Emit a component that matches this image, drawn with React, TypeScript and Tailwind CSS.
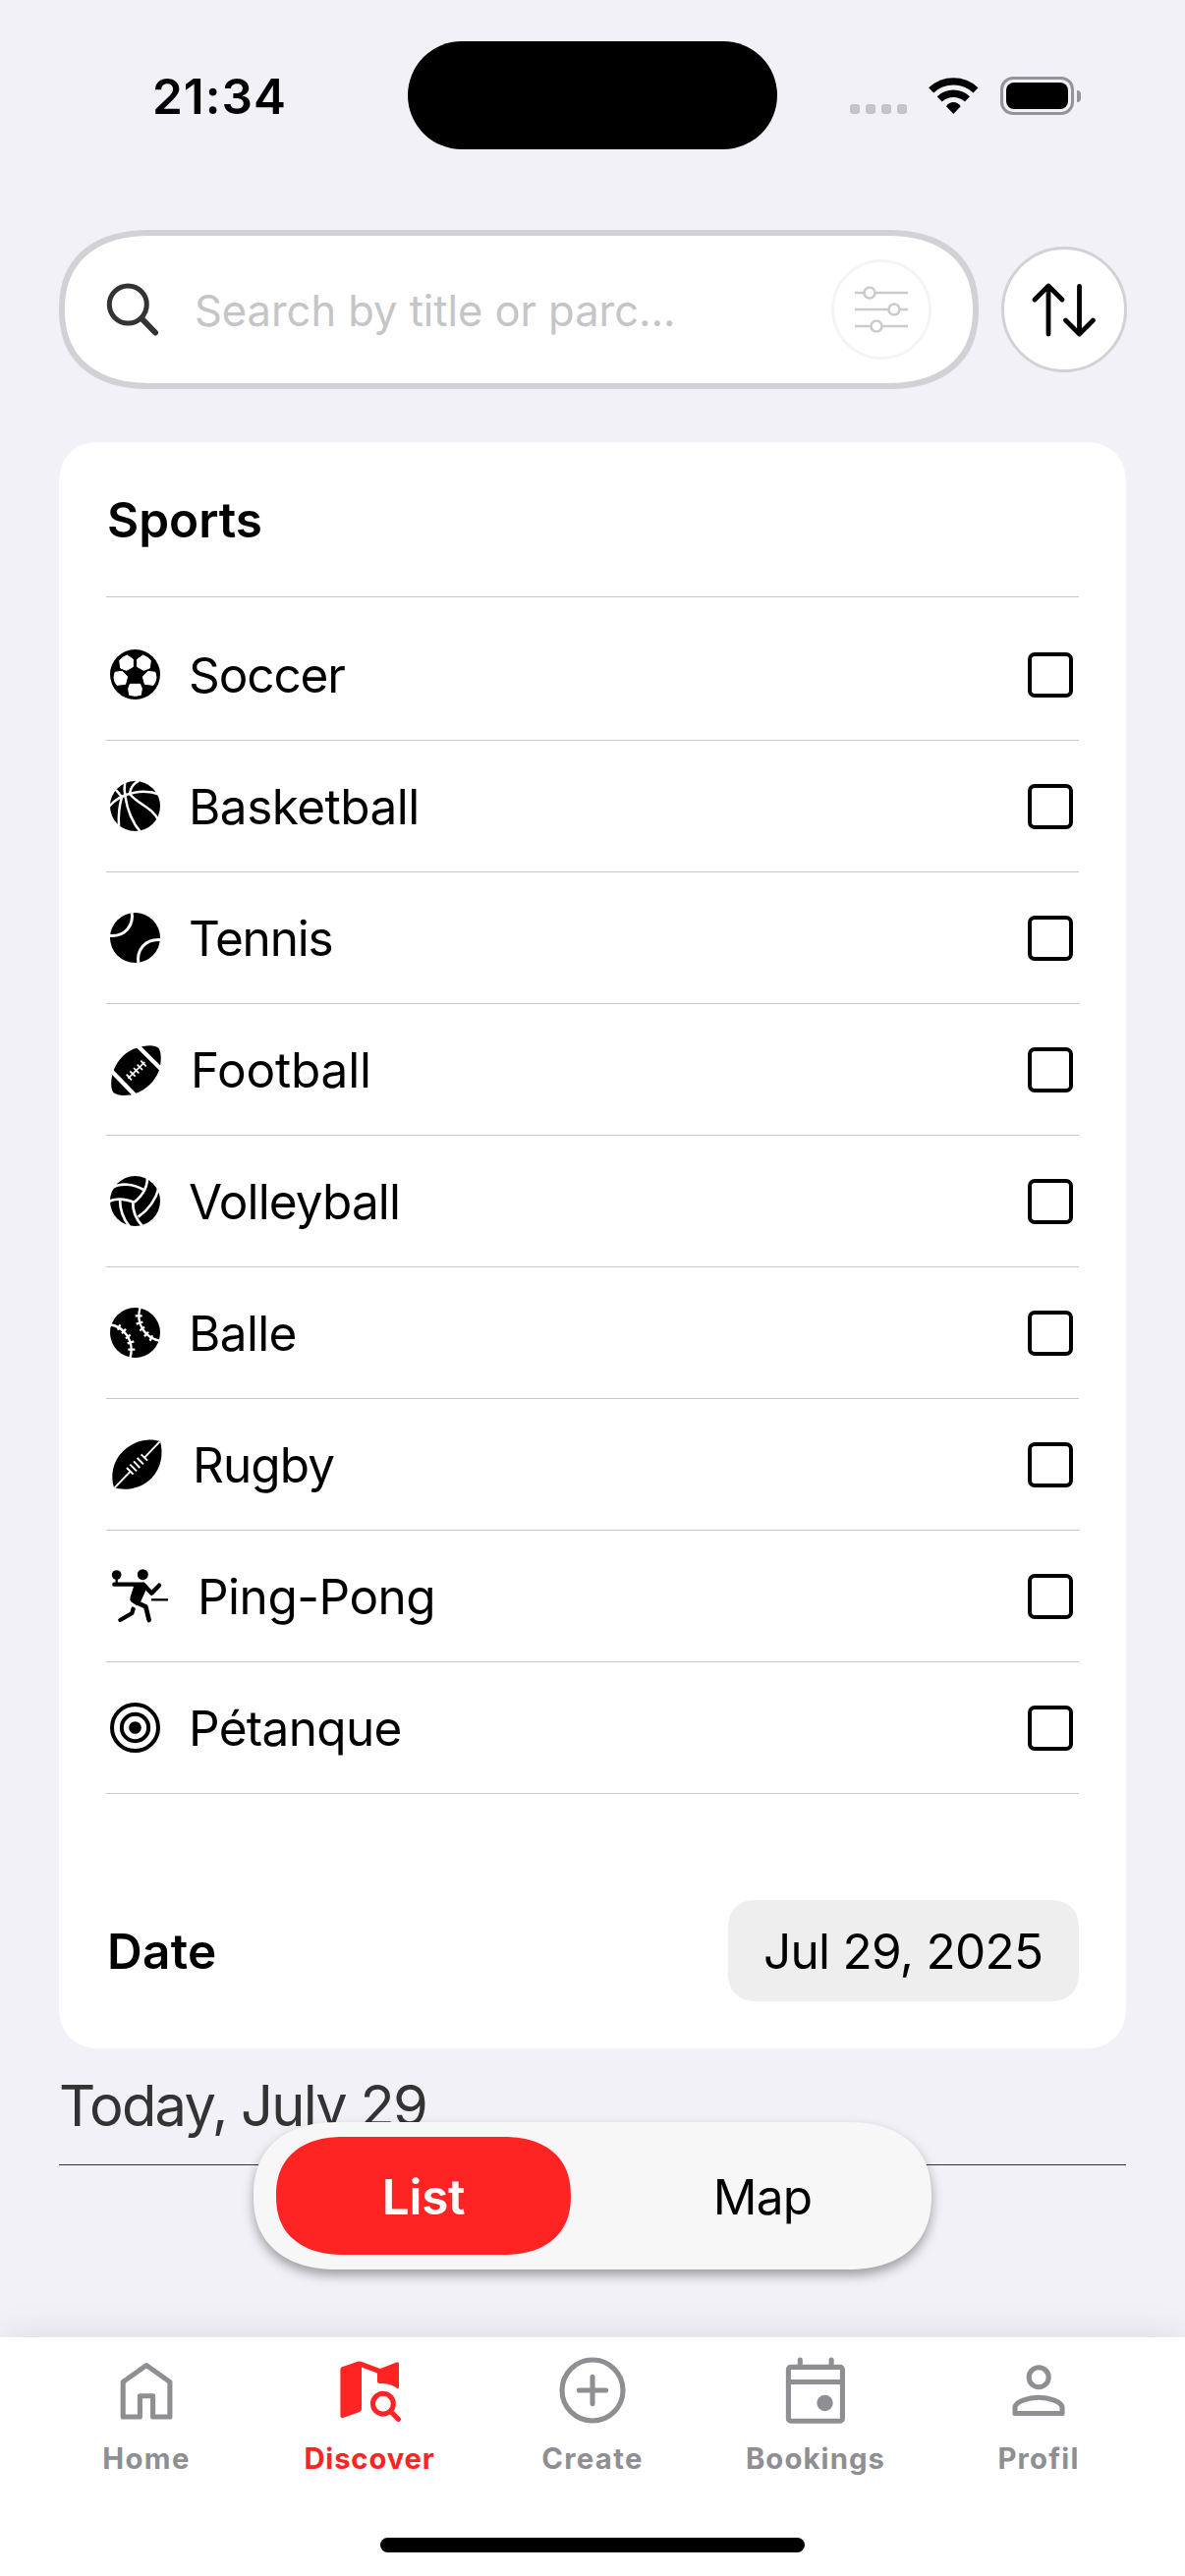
import type { ReactNode } from 'react';

/* ---------- Sport glyphs ---------- */

function Glyph({ top, size = 'w-[55px]', width = 165, children }: { top: number; size?: string; width?: number; children: ReactNode }) {
  return (
    <svg viewBox={`54 ${top} ${width} 171`} className={`h-[57px] shrink-0 overflow-visible ${size}`} fill="black" strokeLinecap="butt">
      {children}
    </svg>
  );
}

function Soccer() {
  return (
    <Glyph top={684}>
      <circle cx="142.5" cy="769.5" r="76.5" />
      <g fill="white" stroke="white" strokeWidth="3" strokeLinejoin="round">
        <path d="M95 727 Q104 716 118 711 L136 723 V746 L116 757 L98 750Z" />
        <path d="M190 727 Q181 716 167 711 L149 723 V746 L169 757 L187 750Z" />
        <path d="M81 763 L103 760 L119 776 L113 799 L87 802 Q79 792 78 779Z" />
        <path d="M204 763 L182 760 L166 776 L172 799 L198 802 Q206 792 207 779Z" />
        <path d="M127 799 H158 L163 813 L160 832 Q142 838 125 832 L122 813Z" />
      </g>
    </Glyph>
  );
}

function Basketball() {
  return (
    <Glyph top={1086}>
      <circle cx="142.5" cy="1171.5" r="76.5" />
      <g fill="none" stroke="white" strokeWidth="7.5">
        <path d="M62 1174 C82 1148 108 1136 140 1130 C168 1124 195 1127 220 1137" />
        <path d="M112 1096 C108 1118 110 1130 112 1140 C118 1180 132 1220 160 1252" />
        <path d="M84 1122 L102 1144 C94 1170 91 1200 93 1232" />
        <path d="M154 1094 C138 1102 128 1116 126 1134 C150 1166 196 1174 214 1216" />
      </g>
    </Glyph>
  );
}

function Tennis() {
  return (
    <Glyph top={228}>
      <circle cx="142.5" cy="313.5" r="76.5" />
      <g fill="none" stroke="white" strokeWidth="9">
        <path d="M132 232 C140 276 112 312 62 307" />
        <path d="M153 395 C145 351 173 315 223 320" />
      </g>
    </Glyph>
  );
}

function Football() {
  return (
    <Glyph top={630} size="w-[57px]" width={171}>
      <path d="M214 650 C222 660 225 690 215 720 C203 752 176 778 145 788 C120 797 90 797 77 787 C67 776 67 746 77 718 C89 686 116 658 147 650 C175 640 204 640 214 650Z" />
      <path d="M151 644 L222 715 M70 720 L142 794" stroke="white" strokeWidth="13" />
      <path
        d="M121 743 L172 693 M116 731 L132 748 M127 721 L143 737 M138 711 L154 727 M149 701 L165 717 M160 689 L176 706"
        stroke="white"
        strokeWidth="5"
      />
    </Glyph>
  );
}

function Volleyball() {
  return (
    <Glyph top={1032}>
      <circle cx="142.5" cy="1117.5" r="76.5" />
      <g fill="none" stroke="white" strokeWidth="8">
        <path d="M70 1078 C100 1060 138 1066 168 1083" />
        <path d="M180 1040 C182 1076 164 1102 140 1121" />
        <path d="M62 1119 C86 1106 114 1112 140 1121" />
        <path d="M136 1119 C134 1146 146 1174 166 1196" />
        <path d="M96 1112 C96 1146 106 1172 126 1196" />
        <path d="M216 1074 C206 1112 184 1144 152 1166" />
      </g>
    </Glyph>
  );
}

function Baseball() {
  const seam = 'M64 234 C112 242 142 286 127 338 M97 235 L90 251 M114 248 L102 262 M128 266 L114 277 M139 286 L119 292 M142 311 L121 311';
  return (
    <Glyph top={174}>
      <circle cx="142.5" cy="259.5" r="76.5" />
      <g fill="none" stroke="white" strokeWidth="7">
        <path d={seam} />
        <path d={seam} transform="rotate(180 142.5 259.5)" />
      </g>
    </Glyph>
  );
}

function Rugby() {
  return (
    <Glyph top={576} size="w-[59px]" width={177}>
      <path d="M219 591 C229 626 224 672 192 704 C160 736 114 743 78 733 C68 700 71 654 106 621 C140 588 184 580 219 591Z" />
      <path
        d="M79 734 L126 685 M172 640 L218 592 M117 672 L137 692 M127 662 L147 682 M138 652 L157 672 M149 642 L168 661 M161 631 L180 650"
        stroke="white"
        strokeWidth="6"
      />
    </Glyph>
  );
}

function PingPong() {
  return (
    <Glyph top={108} size="w-[64px]" width={192}>
      <circle cx="86" cy="129" r="14.5" />
      <circle cx="166" cy="128" r="16.5" />
      <path d="M132 160 L170 152 L179 168 L160 210 L148 222 L134 214 Q124 208 128 196 L138 165Z" />
      <g fill="none" stroke="black" strokeLinecap="round" strokeLinejoin="round">
        <path d="M79 158 H168 L193 185 L216 161" strokeWidth="13" />
        <path d="M86 140 V154" strokeWidth="7" strokeLinecap="butt" />
        <path d="M144 212 L175 226 L185 267" strokeWidth="14" />
        <path d="M137 232 L133 246 L97 267" strokeWidth="13" />
      </g>
      <path d="M128 220 L152 232" stroke="white" strokeWidth="4" />
      <path d="M192 205 H243" stroke="black" strokeWidth="7" />
    </Glyph>
  );
}

function Petanque() {
  return (
    <Glyph top={510}>
      <g fill="none" stroke="black" strokeWidth="12">
        <circle cx="142.5" cy="595.5" r="70.5" />
        <circle cx="142.5" cy="595.5" r="41" />
      </g>
      <circle cx="142.5" cy="595.5" r="19" />
    </Glyph>
  );
}

const sports: { name: string; icon: ReactNode; tracking: string }[] = [
  { name: 'Soccer', icon: <Soccer />, tracking: 'tracking-[-1.11px]' },
  { name: 'Basketball', icon: <Basketball />, tracking: 'tracking-[-0.52px]' },
  { name: 'Tennis', icon: <Tennis />, tracking: 'tracking-[-1.18px]' },
  { name: 'Football', icon: <Football />, tracking: 'tracking-[-0.2px]' },
  { name: 'Volleyball', icon: <Volleyball />, tracking: 'tracking-[-0.88px]' },
  { name: 'Balle', icon: <Baseball />, tracking: 'tracking-[-0.64px]' },
  { name: 'Rugby', icon: <Rugby />, tracking: 'tracking-[-0.9px]' },
  { name: 'Ping-Pong', icon: <PingPong />, tracking: 'tracking-[-0.49px]' },
  { name: 'Pétanque', icon: <Petanque />, tracking: 'tracking-[-0.68px]' },
];

/* ---------- Sections ---------- */

function StatusBar() {
  return (
    <header className="flex h-[234px] items-start pt-[42px]">
      <div className="flex h-[111px] w-[415px] items-center pl-[155px] pt-[2px] text-[49.5px] font-semibold tracking-[0.99px]">21:34</div>
      <div className="h-[110px] w-[376px] rounded-full bg-black" />
      <div className="ml-[74px] mt-[36px] flex h-[39px] items-start">
        <div className="mt-[28px] flex gap-[6px]">
          <span className="size-[10px] rounded-[3px] bg-[#c3c3c8]" />
          <span className="size-[10px] rounded-[3px] bg-[#c3c3c8]" />
          <span className="size-[10px] rounded-[3px] bg-[#c3c3c8]" />
          <span className="size-[10px] rounded-[3px] bg-[#c3c3c8]" />
        </div>
        <svg viewBox="375 84 153 117" className="ml-[22px] h-[39px] w-[51px]" fill="none" stroke="black" strokeWidth="22">
          <path d="M383 125.5 A99.5 99.5 0 0 1 519 125.5" />
          <path d="M408.7 152.5 A62 62 0 0 1 493.3 152.5" />
          <path d="M451 198 L429 174.5 Q438 162 451 162 Q464 162 473 174.5Z" fill="black" stroke="none" />
        </svg>
        <div className="ml-[22px] flex items-center">
          <div className="h-[39px] w-[75px] rounded-[13px] border-3 border-[#959598] p-[3px]">
            <div className="h-full w-full rounded-[8px] bg-black" />
          </div>
          <div className="ml-[3px] h-[12px] w-[4px] rounded-r-full bg-[#959598]" />
        </div>
      </div>
    </header>
  );
}

function SearchRow() {
  return (
    <div className="flex items-center justify-between pl-[60px] pr-[59px]">
      <div className="flex h-[162px] w-[936px] items-center rounded-[94px/81px] border-6 border-[#d1d1d6] bg-white pl-[36px] pr-[42px] [corner-shape:superellipse(1.22)]">
        <svg viewBox="0 0 66 66" className="size-[66px] shrink-0" fill="none" stroke="#333333" strokeLinecap="round">
          <circle cx="28.3" cy="28" r="19" strokeWidth="5" />
          <path d="M42.5 42.5 L56 56.5" strokeWidth="6" />
        </svg>
        <span className="ml-[30px] pt-[3px] text-[43.5px] tracking-[-0.04px] whitespace-nowrap text-[#c5c5c7]">Search by title or parc...</span>
        <div className="ml-auto flex size-[102px] items-center justify-center rounded-full border-3 border-[#f4f4f5]">
          <svg viewBox="0 0 60 60" className="size-[60px] shrink-0" fill="white" stroke="#cbcbcd" strokeWidth="2.6">
            <path d="M3 13 H57 M3 30 H57 M3 47 H57" />
            <circle cx="18" cy="13" r="5.5" />
            <circle cx="43" cy="30" r="5.5" />
            <circle cx="25" cy="47" r="5.5" />
          </svg>
        </div>
      </div>
      <div className="flex size-[128px] items-center justify-center rounded-full border-3 border-[#d1d1d6] bg-white">
        <svg viewBox="0 0 60 60" className="size-[60px] shrink-0 overflow-visible" fill="none" stroke="black" strokeWidth="4.8" strokeLinecap="round" strokeLinejoin="round">
          <path d="M14 55 V6.5 M0 20 L14 6 L28 20" />
          <path d="M45.5 6.5 V54.5 M31.5 41 L45.5 55 L59.5 41" />
        </svg>
      </div>
    </div>
  );
}

function FilterCard() {
  return (
    <section className="mx-[60px] mt-[54px] rounded-[43px] bg-white px-[48px] pb-[48px] [corner-shape:superellipse(1.22)]">
      <h2 className="flex h-[158px] items-center border-b border-[#c6c6c8] pt-[2px] pl-px text-[49.5px] font-semibold">Sports</h2>
      <ul className="pt-[12px]">
        {sports.map((s) => (
          <li key={s.name} className="flex h-[134px] items-center border-b border-[#c6c6c8]">
            {s.icon}
            <span className={`ml-[29px] pt-px text-[49.5px] ${s.tracking}`}>{s.name}</span>
            <span className="ml-auto mr-[6px] size-[46px] rounded-[7px] border-4 border-black" />
          </li>
        ))}
      </ul>
      <div className="mt-[108px] flex h-[103px] items-center justify-between">
        <span className="pt-[2px] pl-px text-[49.5px] font-semibold tracking-[0.3px]">Date</span>
        <span className="flex h-full w-[357px] items-center rounded-[29px] bg-[#eeeeef] pt-[2px] pl-[36px] text-[49.5px] tracking-[-0.71px] whitespace-nowrap [corner-shape:superellipse(1.22)]">
          Jul 29, 2025
        </span>
      </div>
    </section>
  );
}

const tabs: { label: string; tracking: string; active?: boolean; icon: ReactNode }[] = [
  {
    label: 'Home',
    tracking: 'tracking-[1.4px]',
    icon: <path d="M34 8.5 L57.9 25.5 V61 H40.6 V39.8 H27.4 V61 H10.2 V25.5Z" />,
  },
  {
    label: 'Discover',
    tracking: 'tracking-[0.83px]',
    active: true,
    icon: (
      <>
        <path
          fill="currentColor"
          stroke="none"
          d="M4.4 13 Q4.4 11 6 10.3 L22 4.8 Q23.8 4.2 25.5 4.8 L45 12 L61.5 5.5 Q64 4.8 64 7.2 V30.5 Q64 33 61.8 31.8 C57 28 51 27 44.5 27 Q42 27 42 24.5 V16.6 L26 10.6 V53 Q26 55 24 56 L7 62 Q4.4 62.6 4.4 60Z"
        />
        <circle cx="47.9" cy="47.7" r="10.4" />
        <path d="M56 56 L63.5 63.5" />
      </>
    ),
  },
  {
    label: 'Create',
    tracking: 'tracking-[1.3px]',
    icon: (
      <>
        <circle cx="34" cy="34" r="31" />
        <path d="M20.4 34 H47.6 M34 20.4 V47.6" />
      </>
    ),
  },
  {
    label: 'Bookings',
    tracking: 'tracking-[1.1px]',
    icon: (
      <>
        <rect x="6.4" y="10.4" width="55" height="54.8" rx="2.5" />
        <path d="M6.4 25.5 H61.4 M18.3 3 V10 M50.1 3 V10" />
        <circle cx="43.5" cy="47" r="8.2" fill="currentColor" stroke="none" />
      </>
    ),
  },
  {
    label: 'Profil',
    tracking: 'tracking-[1.2px]',
    icon: (
      <>
        <circle cx="34.2" cy="20.7" r="10" />
        <path d="M10 57.5 V51.5 C10 45.5 24 41.2 34 41.2 C44 41.2 58 45.5 58 51.5 V57.5 Z" />
      </>
    ),
  },
];

function TabBar() {
  return (
    <nav className="absolute inset-x-0 bottom-0 h-[243px] bg-white pt-[20px] shadow-[0_0_36px_rgba(0,0,0,0.1)]">
      <div className="flex justify-center">
        {tabs.map((t) => (
          <div key={t.label} className={`flex w-[227px] flex-col items-center ${t.active ? 'text-[#ff2424]' : 'text-[#8e8e93]'}`}>
            <svg viewBox="0 0 68 68" className="size-[68px]" fill="none" stroke="currentColor" strokeWidth="5.1" strokeLinecap="round" strokeLinejoin="round">
              {t.icon}
            </svg>
            <span className={`mt-[18px] text-[29.3px] leading-[36px] font-bold ${t.tracking}`}>{t.label}</span>
          </div>
        ))}
      </div>
      <div className="mx-auto mt-[62px] h-[15px] w-[432px] rounded-full bg-black" />
    </nav>
  );
}

export default function App() {
  return (
    <div className="relative h-[2622px] w-[1206px] overflow-hidden bg-[#f2f1f7] font-['Inter','Liberation_Sans',sans-serif] text-black">
      <StatusBar />
      <SearchRow />
      <FilterCard />
      <div className="mx-[60px] flex h-[119px] items-center border-b border-[#333333] pb-px text-[57.8px] tracking-[-1.75px] text-[#333333]">
        Today, July 29
      </div>
      <div className="absolute left-[258px] top-[2160px] flex h-[150px] w-[690px] items-center justify-between rounded-[87px/75px] bg-[#f7f7f7] px-[23px] shadow-[0_6px_12px_rgba(0,0,0,0.35)] [corner-shape:superellipse(1.22)]">
        <div className="flex h-[120px] w-[300px] items-center justify-center rounded-[70px/60px] bg-[#ff2424] pt-[2px] text-[49.5px] font-semibold tracking-[-0.28px] text-white [corner-shape:superellipse(1.22)]">
          List
        </div>
        <div className="flex h-[120px] w-[300px] items-center justify-center pt-[2px] pl-[2px] text-[49.5px] tracking-[-0.75px]">Map</div>
      </div>
      <TabBar />
    </div>
  );
}
